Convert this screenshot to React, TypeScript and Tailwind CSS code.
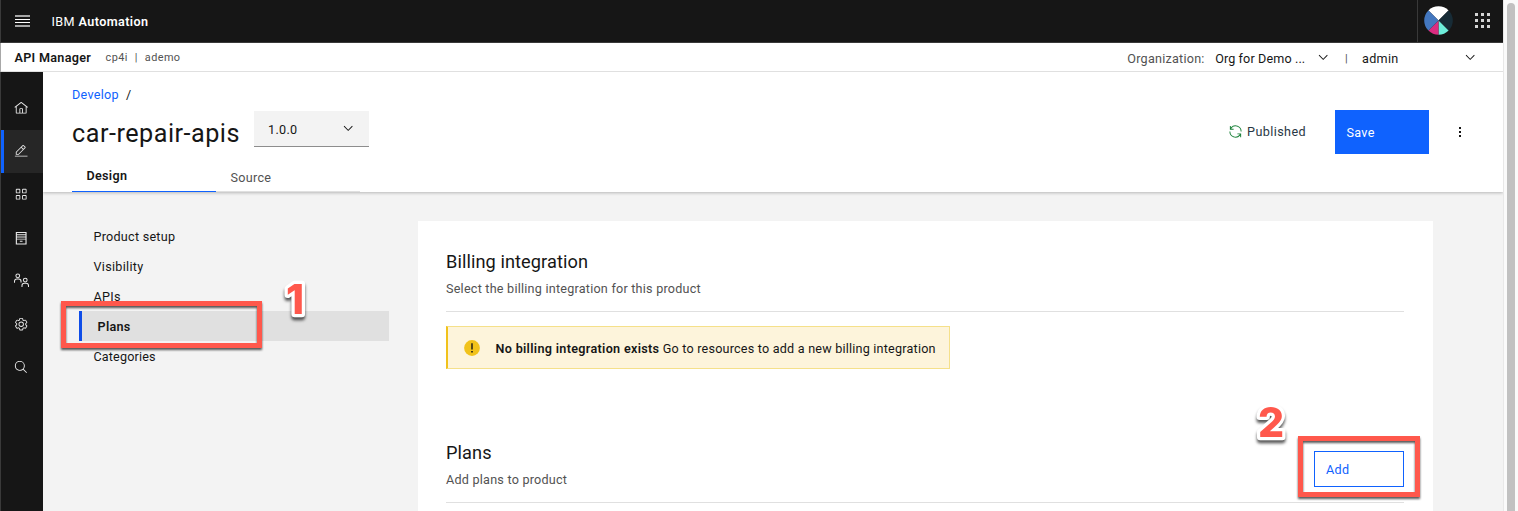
import type { ReactNode } from "react";

const paths = {
  home: "M16.6123,2.2138a1.01,1.01,0,0,0-1.2427,0L1,13.4194l1.2427,1.5717L4,13.6208V26a2.0041,2.0041,0,0,0,2,2H26a2.0037,2.0037,0,0,0,2-2V13.63L29.7573,15,31,13.4282ZM18,26H14V18h4Zm2,0V18a2.0023,2.0023,0,0,0-2-2H14a2.002,2.002,0,0,0-2,2v8H6V12.0615l10-7.79,10,7.8005V26Z",
  edit: "M2 26H30V28H2zM25.4 9c.8-.8.8-2 0-2.8l-3.6-3.6c-.8-.8-2-.8-2.8 0l-15 15V24h6.4L25.4 9zM20.4 4L24 7.6l-3 3L17.4 7 20.4 4zM6 22v-3.6l10-10 3.6 3.6-10 10H6z",
  grid: "M12 4H6A2 2 0 004 6v6a2 2 0 002 2h6a2 2 0 002-2V6A2 2 0 0012 4zm0 8H6V6h6zM26 4H20a2 2 0 00-2 2v6a2 2 0 002 2h6a2 2 0 002-2V6A2 2 0 0026 4zm0 8H20V6h6zM12 18H6a2 2 0 00-2 2v6a2 2 0 002 2h6a2 2 0 002-2V20A2 2 0 0012 18zm0 8H6V20h6zM26 18H20a2 2 0 00-2 2v6a2 2 0 002 2h6a2 2 0 002-2V20A2 2 0 0026 18zm0 8H20V20h6z",
  catalog: "M4 2H28V30H4ZM6.5 4.2V7H25.5V4.2ZM6.5 9.2V12H25.5V9.2ZM6.5 14.4V17H25.5V14.4ZM6.5 19V27.8H25.5V19ZM13 21.5H19V23.7H13Z",
  settings: "M27,16.76c0-.25,0-.5,0-.76s0-.51,0-.77l1.92-1.68A2,2,0,0,0,29.3,11L26.94,7a2,2,0,0,0-1.73-1,2,2,0,0,0-.64.1l-2.43.82a11.35,11.35,0,0,0-1.31-.75l-.51-2.52a2,2,0,0,0-2-1.61H13.64a2,2,0,0,0-2,1.61l-.51,2.52a11.48,11.48,0,0,0-1.32.75L7.43,6.06A2,2,0,0,0,6.79,6,2,2,0,0,0,5.06,7L2.7,11a2,2,0,0,0,.41,2.51L5,15.24c0,.25,0,.5,0,.76s0,.51,0,.77L3.11,18.45A2,2,0,0,0,2.7,21L5.06,25a2,2,0,0,0,1.73,1,2,2,0,0,0,.64-.1l2.43-.82a11.35,11.35,0,0,0,1.31.75l.51,2.52a2,2,0,0,0,2,1.61h4.72a2,2,0,0,0,2-1.61l.51-2.52a11.48,11.48,0,0,0,1.32-.75l2.42.82a2,2,0,0,0,.64.1,2,2,0,0,0,1.73-1L29.3,21a2,2,0,0,0-.41-2.51ZM25.21,24l-3.43-1.16a8.86,8.86,0,0,1-2.71,1.57L18.36,28H13.64l-.71-3.55a9.36,9.36,0,0,1-2.7-1.57L6.79,24,4.43,20l2.72-2.4a8.9,8.9,0,0,1,0-3.13L4.43,12,6.79,8l3.43,1.16a8.86,8.86,0,0,1,2.71-1.57L13.64,4h4.72l.71,3.55a9.36,9.36,0,0,1,2.7,1.57L25.21,8,27.57,12l-2.72,2.4a8.9,8.9,0,0,1,0,3.13L27.57,20ZM16 22a6 6 0 1 1 0-12a6 6 0 0 1 0 12ZM16 12a4 4 0 1 0 0 8a4 4 0 0 0 0-8Z",
  search: "M29,27.5859l-7.5521-7.5521a11.0177,11.0177,0,1,0-1.4141,1.4141L27.5859,29ZM4,13a9,9,0,1,1,9,9A9.01,9.01,0,0,1,4,13Z",
  renew: "M12 10H6.78A11 11 0 0127 16h2A13 13 0 006 7.68V4H4v8h8zM20 22h5.22A11 11 0 015 16H3a13 13 0 0023 8.32V28h2V20H20z",
  chevron: "M16 22L6 12 7.4 10.6 16 19.2 24.6 10.6 26 12z",
};

function Icon({ d, className }: { d: string; className: string }) {
  return (
    <svg viewBox="0 0 32 32" className={`shrink-0 ${className}`} fill="currentColor" fillRule="evenodd">
      <path d={d} />
    </svg>
  );
}

function MembersIcon() {
  return (
    <svg viewBox="0 0 32 32" className="size-[15px] shrink-0" fill="none" stroke="currentColor" strokeWidth="2.2">
      <circle cx="8" cy="6" r="4" />
      <path d="M1 21v-3a5 5 0 0 1 5-5h4a5 5 0 0 1 5 5v2" />
      <circle cx="24" cy="15" r="4" />
      <path d="M17 30v-3a5 5 0 0 1 5-5h4a5 5 0 0 1 5 5v3" />
    </svg>
  );
}

function Avatar() {
  return (
    <svg viewBox="-14.5 -14.5 29 29" className="size-[29px] shrink-0">
      <clipPath id="avatar">
        <circle r="14.3" />
      </clipPath>
      <g clipPath="url(#avatar)">
        <path d="M0 0L-16-16H16Z" fill="#ffffff" />
        <path d="M0 0L16-16V16Z" fill="#172b36" />
        <path d="M0 0L16 16H0Z" fill="#6eeedb" />
        <path d="M0 0L-16 16H0Z" fill="#da2c80" />
        <path d="M0 0L-16-16V16Z" fill="#4377bf" />
      </g>
    </svg>
  );
}

function RailItem({ active, children }: { active?: boolean; children: ReactNode }) {
  return (
    <div
      className={`flex h-[43.2px] items-center border-l-[3px] pr-[2px] pl-[10px] text-[#e8e8e8] ${
        active ? "border-[#0f62fe] bg-[#262626]" : "border-transparent"
      }`}
    >
      {children}
    </div>
  );
}

function SectionHead({ title, note }: { title: string; note: ReactNode }) {
  return (
    <div>
      <h2 className="text-[18.2px] leading-6 tracking-[0.08px]">{title}</h2>
      <p className="mt-[5px] text-[12.6px] leading-5 tracking-[0.23px] text-[#525252]">{note}</p>
    </div>
  );
}

function Callout({ digit, className }: { digit: string; className: string }) {
  return (
    <svg
      viewBox="0 0 60 72"
      className={`absolute h-[72px] w-[60px] overflow-visible drop-shadow-[0_3px_1.5px_rgba(0,0,0,0.65)] ${className}`}
    >
      <text
        x="30"
        y="50.5"
        textAnchor="middle"
        className="fill-[#ff584c] stroke-white font-[Inter,sans-serif] text-[41px] font-extrabold tracking-normal [paint-order:stroke_fill]"
        strokeWidth="6.5"
        strokeLinejoin="round"
      >
        {digit}
      </text>
    </svg>
  );
}

export default function App() {
  return (
    <div className="relative flex h-[511px] w-[1518px] overflow-hidden bg-white font-[Roboto,sans-serif] text-[12.6px] tracking-[0.3px] text-[#161616]">
      <div className="flex w-px flex-col">
        <i className="h-[43px] bg-[#3a3a3a]" />
        <i className="h-[29px] bg-[#a8a8a8]" />
        <i className="flex-1 bg-[#3a3a3a]" />
      </div>
      <div className="flex w-[1502px] flex-col">
        <header className="flex h-[43px] shrink-0 items-center border-b border-[#393939] bg-[#161616] text-white">
          <div className="ml-[14px] flex w-[15px] flex-col gap-[2px]">
            <i className="h-[2px] bg-[#a6a6a6]" />
            <i className="h-px bg-[#ffffff]" />
            <i className="h-px bg-[#ffffff]" />
            <i className="h-[2px] bg-[#a6a6a6]" />
          </div>
          <div className="ml-[21.5px] pt-px leading-5 tracking-[0.4px]">
            IBM <b className="font-semibold">Automation</b>
          </div>
          <div className="ml-auto flex h-full items-center border-l border-[#393939] pb-px pl-[6px]">
            <Avatar />
            <div className="mr-[13px] ml-[22px] grid grid-cols-3 gap-[3px]">
              {Array.from({ length: 9 }, (_, i) => (
                <i key={i} className="size-[3px] bg-[#d4d4d4]" />
              ))}
            </div>
          </div>
        </header>

        <div className="flex h-[29px] shrink-0 items-center border-b border-[#e0e0e0] bg-white whitespace-nowrap">
          <b className="ml-[13.5px] pt-[2px] font-semibold">API Manager</b>
          <span className="ml-[14.5px] flex gap-[7px] pt-[2px] text-[10.9px] tracking-[0.4px] text-[#525252]">
            <span>cp4i</span>
            <span>|</span>
            <span>ademo</span>
          </span>
          <span className="ml-auto pt-[4px] tracking-[0.24px] text-[#525252]">Organization:</span>
          <span className="w-[111px] pt-[4px] pl-[10.5px] tracking-[0.12px]">Org for Demo ...</span>
          <Icon d={paths.chevron} className="size-[14.4px] text-[#161616]" />
          <span className="ml-[15px] pt-[4px] text-[11px] text-[#525252]">|</span>
          <span className="ml-[14px] w-[101px] pt-[4px]">admin</span>
          <Icon d={paths.chevron} className="mr-[25.6px] size-[14.4px] text-[#161616]" />
        </div>

        <div className="flex min-h-0 flex-1">
          <nav className="flex w-[42px] shrink-0 flex-col bg-[#161616] pt-[14.6px]">
            <RailItem>
              <Icon d={paths.home} className="size-[14.4px]" />
            </RailItem>
            <RailItem active>
              <Icon d={paths.edit} className="size-[14.4px]" />
            </RailItem>
            <RailItem>
              <Icon d={paths.grid} className="size-[14.4px]" />
            </RailItem>
            <RailItem>
              <Icon d={paths.catalog} className="size-[14.4px]" />
            </RailItem>
            <RailItem>
              <MembersIcon />
            </RailItem>
            <RailItem>
              <Icon d={paths.settings} className="size-[14.4px]" />
            </RailItem>
            <RailItem>
              <Icon d={paths.search} className="size-[14.4px]" />
            </RailItem>
          </nav>

          <div className="flex min-w-0 flex-1 flex-col overflow-hidden bg-[#f3f3f3]">
            <div className="z-10 flex h-[120px] shrink-0 flex-col bg-white pl-[29px] shadow-[0_1px_3px_rgba(0,0,0,0.25)]">
              <div className="mt-[13px] flex h-5 items-center gap-[7px]">
                <a className="text-[#0f62fe]">Develop</a>
                <span>/</span>
              </div>
              <div className="flex h-[55px] items-start">
                <h1 className="mt-[13px] w-[182px] text-[25.2px] leading-8 tracking-[0.5px] whitespace-nowrap">
                  car-repair-apis
                </h1>
                <div className="mt-[6px] flex h-9 w-[115px] items-center justify-between border-b border-[#8d8d8d] bg-[#f3f3f3] pr-[14px] pl-[14px]">
                  <span className="pt-[3px]">1.0.0</span>
                  <Icon d={paths.chevron} className="size-[14.4px]" />
                </div>
                <div className="mt-[16px] mr-[29px] ml-auto flex h-5 items-center gap-1 text-[#283845]">
                  <Icon d={paths.renew} className="size-[15px] text-[#198038]" />
                  <span className="pt-[2px] tracking-[0.4px]">Published</span>
                </div>
                <button className="mt-[5px] flex h-11 w-[94px] items-center bg-[#0f62fe] pt-[2px] pl-[11.5px] text-white">
                  Save
                </button>
                <div className="mt-[22px] mr-[42px] ml-[30px] flex flex-col gap-[2px]">
                  <i className="size-[2px] bg-[#161616]" />
                  <i className="size-[2px] bg-[#161616]" />
                  <i className="size-[2px] bg-[#161616]" />
                </div>
              </div>
              <div className="mt-auto flex">
                <div className="h-8 w-36 border-b border-[#0f62fe] pt-1.5 pl-[14.5px] leading-5 font-semibold">Design</div>
                <div className="h-8 w-36 border-b border-[#e0e0e0] pt-2 pl-[14.5px] leading-5 text-[#525252]">Source</div>
              </div>
            </div>

            <div className="flex min-h-0 flex-1 items-start">
              <ul className="mt-[29px] ml-[36px] w-[310px] leading-[30px]">
                <li className="h-[30px] pt-px pl-[14.5px] tracking-[0.25px]">Product setup</li>
                <li className="h-[30px] pt-px pl-[14.5px]">Visibility</li>
                <li className="h-[30px] pt-px pl-[14.5px]">APIs</li>
                <li className="h-[30px] border-l-[3px] border-[#0f4de8] bg-[#e0e0e0] pt-px pl-[15.5px] font-semibold">
                  Plans
                </li>
                <li className="h-[30px] pt-px pl-[14.5px] tracking-[0.15px]">Categories</li>
              </ul>
              <main className="mt-[29px] ml-[29px] h-[300px] w-[1015px] bg-white pt-[29px] pr-[29px] pl-[28px]">
                <div className="h-[62px] border-b border-[#e0e0e0]">
                  <SectionHead title="Billing integration" note="Select the billing integration for this product" />
                </div>
                <div className="mt-[14px] flex h-[43px] w-[504px] items-center border border-l-2 border-[#f5e08a] border-l-[#f1c21b] bg-[#fdf4db] pl-[16px]">
                  <svg viewBox="0 0 16 16" className="size-4 shrink-0">
                    <circle cx="8" cy="8" r="7.9" fill="#f1c21b" />
                    <path d="M7.3 3.2h1.4v6.3H7.3zM7.2 11h1.6v1.6H7.2z" fill="#161616" />
                  </svg>
                  <p className="ml-[15.5px] pt-[3px] tracking-[0.21px] whitespace-nowrap">
                    <b className="font-semibold tracking-[0.32px]">No billing integration exists</b> Go to resources to
                    add a new billing integration
                  </p>
                </div>
                <div className="mt-[72px] flex h-[62px] items-start justify-between border-b border-[#e0e0e0]">
                  <SectionHead title="Plans" note="Add plans to product" />
                  <button className="mt-[10px] flex h-9 w-[90px] items-center border border-[#0f62fe] pt-[2px] pl-[11px] text-[#0f62fe]">
                    Add
                  </button>
                </div>
              </main>
            </div>
          </div>
        </div>
      </div>

      <div className="flex flex-1 justify-center border-l border-[#e8e8e8] bg-[#fafafa] pt-[3px]">
        <div className="h-[520px] w-2 rounded-t-full bg-[#c1c1c1]" />
      </div>

      <div className="absolute top-[301px] left-[61px] z-20 h-[47px] w-[201px] border-5 border-[#ff584c] drop-shadow-[0_2px_1px_rgba(0,0,0,0.65)]" />
      <div className="absolute top-[436px] left-[1298px] z-20 h-[61px] w-[122px] border-5 border-[#ff584c] drop-shadow-[0_2px_1px_rgba(0,0,0,0.65)]" />
      <Callout digit="1" className="top-[263px] left-[265px] z-20" />
      <Callout digit="2" className="top-[386px] left-[1241px] z-20" />
    </div>
  );
}
